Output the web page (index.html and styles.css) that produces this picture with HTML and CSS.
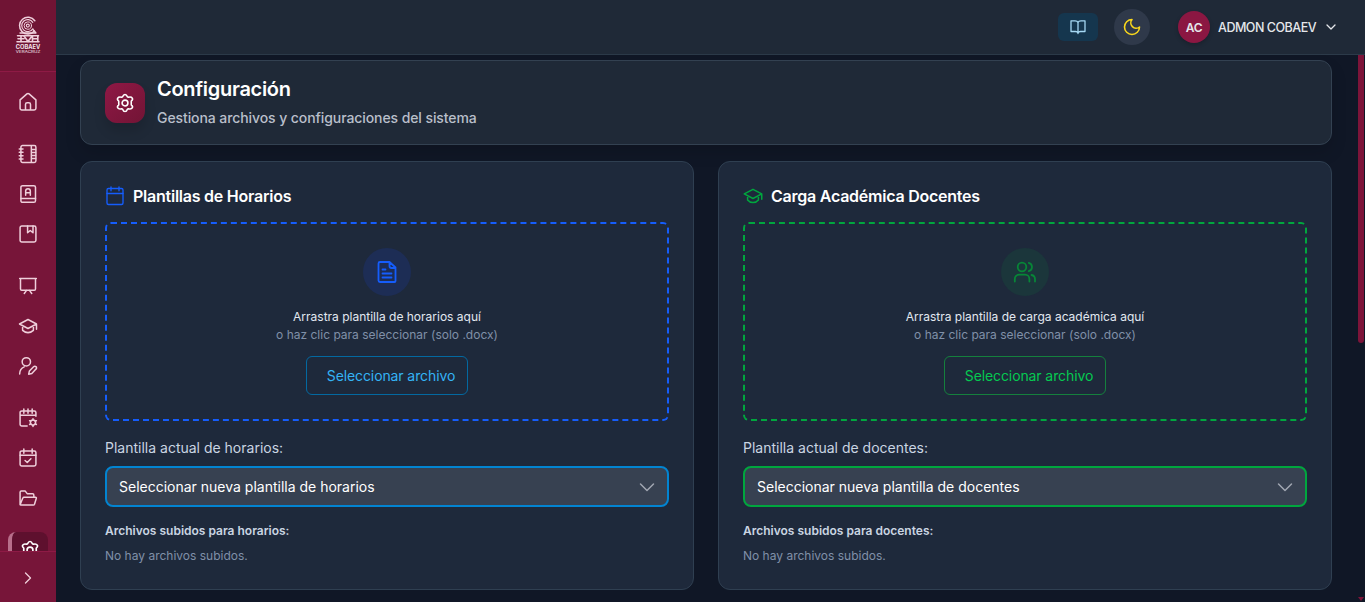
FILE: index.html
```html
<!DOCTYPE html>
<html lang="es">
<head>
<meta charset="utf-8">
<title>Configuración</title>
<link rel="stylesheet" href="styles.css">
</head>
<body>
<div class="app">
  <aside class="sidebar">
    <div class="brand">
      <svg class="logo" width="28" height="38" viewBox="0 0 28 38" fill="none" stroke="#f5e6ec">
        <path d="M20.800 4.800A8.400 8.400 0 1 0 20.400 15" stroke-width="1.500"/>
        <path d="M18.800 6.300A6 6 0 1 0 18.800 12.800" stroke-width="1.200"/>
        <circle cx="13.800" cy="9.600" r="3.700" stroke-width="1"/>
        <circle cx="13.800" cy="9.600" r="1.500" stroke-width="1.200"/>
        <path d="M19 13.500 22 17H6" stroke-width="1.300"/>
        <path d="M3.500 19.800H24.500M3 25.800h22" stroke-width="1.500"/>
        <path d="M4 22.700h6M18.500 22.700h5.500M7 25.500v-5.500M10 20l4 5.500 4-5.500M18.500 25.500V20M23.800 20v5.500" stroke-width="1.600"/>
        <text class="logo-name" x="1.800" y="32.600" textLength="24.500" lengthAdjust="spacingAndGlyphs">COBAEV</text>
        <text class="logo-sub" x="1.800" y="36.800" textLength="24.500" lengthAdjust="spacingAndGlyphs">VERACRUZ</text>
      </svg>
    </div>
    <nav class="nav">
      <div class="group">
        <a class="item"><svg class="ico" viewBox="0 0 24 24"><path d="M2.500 9.500 10.700 2.300a2 2 0 0 1 2.600 0L21.500 9.500v10a2 2 0 0 1-2 2h-15a2 2 0 0 1-2-2zM9 21.500V15a2 2 0 0 1 2-2h2a2 2 0 0 1 2 2v6.500"/></svg></a>
      </div>
      <div class="group">
        <a class="item"><svg class="ico" viewBox="0 0 24 24"><rect x="3.500" y="1.800" width="18" height="20.400" rx="2"/><path d="M16 2v20M1.500 6H6M1.500 10H6M1.500 14H6M1.500 18H6M16 6.500h5M16 10.200h5M16 13.800h5M16 17.500h5"/></svg></a>
        <a class="item"><svg class="ico" viewBox="0 0 24 24"><rect x="3.500" y="2" width="17.500" height="20" rx="2"/><path d="M3.500 17.500h17.500M9.200 13.500V8.500a2.800 2.800 0 0 1 5.600 0v5M9.200 10.500h5.600"/></svg></a>
        <a class="item"><svg class="ico" viewBox="0 0 24 24"><rect x="2.500" y="2.500" width="19" height="19" rx="2"/><path d="M11.500 2.500v8l3.200-2.700 3.300 2.700v-8"/></svg></a>
      </div>
      <div class="group">
        <a class="item"><svg class="ico" viewBox="0 0 24 24"><path d="M2 3h20M3 3v12.500a1.500 1.500 0 0 0 1.500 1.500h15a1.500 1.500 0 0 0 1.500-1.500V3M10.500 17 7.500 21M13.500 17l3 4"/></svg></a>
        <a class="item"><svg class="ico" viewBox="0 0 24 24"><path d="M12 4.200 1.800 9.600 12 15l10.200-5.400zM22.200 9.800V16M5.500 11.700v5.500c4 3.400 9 3.400 13 0v-5.500"/></svg></a>
        <a class="item"><svg class="ico" viewBox="0 0 24 24"><circle cx="10" cy="7" r="5"/><path d="M2 21.500c0-4 2-7 5.500-8.500M21.600 12.800a2 2 0 0 0-2.900 0l-5 5.200-.9 3.800 3.800-.9 5-5.200a2 2 0 0 0 0-2.900z"/></svg></a>
      </div>
      <div class="group">
        <a class="item"><svg class="ico" viewBox="0 0 24 24"><path d="M11 21.500H4.500a2 2 0 0 1-2-2v-14a2 2 0 0 1 2-2h15a2 2 0 0 1 2 2V10M2.500 8.800h19M7 1.200v5M12 1.200v5M17 1.200v5"/><circle cx="18" cy="17.500" r="3.100"/><path d="M18 12.800v1.500M18 20.700v1.500M13.900 15.200l1.300.7M20.800 19.100l1.300.7M13.900 19.800l1.300-.7M20.800 15.900l1.300-.7"/></svg></a>
        <a class="item"><svg class="ico" viewBox="0 0 24 24"><rect x="2.500" y="3.500" width="19" height="18" rx="2"/><path d="M2.500 8.800h19M7 1.200v5M17 1.200v5M8.500 15l2.600 2.400 4.400-4.400"/></svg></a>
        <a class="item"><svg class="ico" viewBox="0 0 24 24"><path d="M2.500 20V5a1.500 1.500 0 0 1 1.500-1.500h4.500L11 6.800h6.500A1.500 1.500 0 0 1 19 8.300V11M2.500 20 5.800 12a1.500 1.500 0 0 1 1.400-1H21a1 1 0 0 1 1 1.300l-2.200 7.200A1.500 1.500 0 0 1 18.300 20.500H3.500a1 1 0 0 1-1-.5z"/></svg></a>
      </div>
      <div class="group">
        <a class="item active"><svg class="ico gear" viewBox="0 0 24 24"><path d="M12 1.800c1.500 0 2.300 1.200 2.700 2.500l1.300.8c1.400-.4 3.900-.3 4.700 1s.1 2.600-1.200 3.600v4.600c1.300 1 2 2.300 1.200 3.600s-3.300 1.400-4.700 1l-1.300.8c-.4 1.300-1.200 2.500-2.700 2.500s-2.300-1.200-2.700-2.500l-1.300-.8c-1.400.4-3.900.3-4.700-1s-.1-2.600 1.200-3.600V9.700c-1.300-1-2-2.300-1.200-3.600s3.300-1.400 4.700-1l1.300-.8c.4-1.300 1.200-2.500 2.700-2.500z"/><circle cx="12" cy="12" r="3.500"/></svg></a>
      </div>
    </nav>
    <div class="expand"><svg width="16" height="16" viewBox="0 0 16 16"><path d="m5.500 3 5 5-5 5"/></svg></div>
  </aside>

  <div class="page">
    <header class="topbar">
      <button class="guide"><svg width="16" height="16" viewBox="0 0 16 16"><path d="M8 3.500v11M8 3.500C7.600 2.300 6.500 1.800 5 1.800H1v10.700h4.500c1.400 0 2.300.5 2.500 1.500.2-1 1.100-1.500 2.500-1.500H15V1.800h-4c-1.500 0-2.600.5-3 1.700z"/></svg></button>
      <button class="theme"><svg width="20" height="20" viewBox="0 0 24 24"><path d="M12 3a6.400 6.400 0 0 0 9 9 9 9 0 1 1-9-9z"/></svg></button>
      <div class="user">
        <span class="avatar">AC</span>
        <span class="user-name">ADMON COBAEV</span>
        <svg width="12" height="12" viewBox="0 0 12 12"><path d="m2 4 4 4 4-4"/></svg>
      </div>
    </header>
    <div class="body">
      <main class="content">
        <section class="card title-card">
          <span class="badge"><svg class="gear" width="20" height="20" viewBox="0 0 24 24"><path d="M12 1.800c1.500 0 2.300 1.200 2.700 2.500l1.300.8c1.400-.4 3.900-.3 4.700 1s.1 2.600-1.200 3.600v4.600c1.300 1 2 2.300 1.200 3.600s-3.300 1.400-4.700 1l-1.300.8c-.4 1.300-1.200 2.500-2.700 2.500s-2.300-1.200-2.700-2.500l-1.300-.8c-1.400.4-3.900.3-4.700-1s-.1-2.600 1.200-3.600V9.700c-1.300-1-2-2.300-1.200-3.600s3.300-1.400 4.700-1l1.300-.8c.4-1.300 1.200-2.500 2.700-2.500z"/><circle cx="12" cy="12" r="3.500"/></svg></span>
          <div>
            <h1>Configuración</h1>
            <p class="subtitle">Gestiona archivos y configuraciones del sistema</p>
          </div>
        </section>
        <div class="columns">
          <section class="card panel blue">
            <h2><svg width="20" height="20" viewBox="0 0 20 20"><rect x="2" y="2.500" width="16" height="16" rx="1.500"/><path d="M2 7.500h16M6 .8v3.900M14 .8v3.900"/></svg>Plantillas de Horarios</h2>
            <div class="drop">
              <span class="round"><svg width="24" height="24" viewBox="0 0 24 24"><path d="M14.500 2H5a1.500 1.500 0 0 0-1.500 1.500v17A1.500 1.500 0 0 0 5 22h14.500a1 1 0 0 0 1-1V7.500zM14.500 2v4a2 2 0 0 0 2 2h4M7.500 9.500h3M7.500 13.500h9M7.500 17.500h9"/></svg></span>
              <p class="lead">Arrastra plantilla de horarios aquí</p>
              <p class="hint">o haz clic para seleccionar (solo .docx)</p>
              <button class="pick">Seleccionar archivo</button>
            </div>
            <label>Plantilla actual de horarios:</label>
            <div class="select"><span>Seleccionar nueva plantilla de horarios</span><svg width="16" height="16" viewBox="0 0 16 16"><path d="m1.500 5 6.500 6.500L14.500 5"/></svg></div>
            <h3>Archivos subidos para horarios:</h3>
            <p class="empty">No hay archivos subidos.</p>
          </section>
          <section class="card panel green">
            <h2><svg width="20" height="20" viewBox="0 0 24 24" class="cap"><path d="M12 4 1.500 9.500 12 15l10.500-5.500zM22.500 9.700V16M5.500 11.700v5c1.800 2.200 4 3.200 6.500 3.200s4.700-1 6.500-3.200v-5"/></svg>Carga Académica Docentes</h2>
            <div class="drop">
              <span class="round"><svg width="24" height="24" viewBox="0 0 24 24"><circle cx="9" cy="7" r="4.300"/><path d="M1.800 21.500V19a4.300 4.300 0 0 1 4.300-4.300h6A4.300 4.300 0 0 1 16.400 19v2.500M15.800 2.900a4.300 4.300 0 0 1 0 8.300M18.500 15a4.300 4.300 0 0 1 3.500 4.200v2.300"/></svg></span>
              <p class="lead">Arrastra plantilla de carga académica aquí</p>
              <p class="hint">o haz clic para seleccionar (solo .docx)</p>
              <button class="pick">Seleccionar archivo</button>
            </div>
            <label>Plantilla actual de docentes:</label>
            <div class="select"><span>Seleccionar nueva plantilla de docentes</span><svg width="16" height="16" viewBox="0 0 16 16"><path d="m1.500 5 6.500 6.500L14.500 5"/></svg></div>
            <h3>Archivos subidos para docentes:</h3>
            <p class="empty">No hay archivos subidos.</p>
          </section>
        </div>
      </main>
      <div class="scrollbar"><span class="thumb"></span><span class="arrow"></span></div>
    </div>
  </div>
</div>
</body>
</html>
```
FILE: styles.css
```css
* { box-sizing: border-box; margin: 0; padding: 0; }
body { font-family: Inter, sans-serif; background: #101726; color: #fff; overflow: hidden; }
svg { fill: none; stroke: currentColor; stroke-linecap: round; stroke-linejoin: round; flex: none; display: block; }
button { font-family: inherit; border: 0; }
.app { display: flex; height: 602px; }

.sidebar { width: 56px; flex: none; display: flex; flex-direction: column; background: #771539; color: #efcfdb; }
.brand { height: 72px; flex: none; padding-top: 16px; display: flex; justify-content: center; background: #701434; border-bottom: 1px solid #8e1a45; }
.logo text { fill: #f5e6ec; stroke: none; font-family: Inter, sans-serif; }
.logo-name { font-size: 5.500px; font-weight: 700; }
.logo-sub { font-size: 4px; font-weight: 400; }
.nav { flex: 1; min-height: 0; overflow: hidden; padding: 12px 8px 0; display: flex; flex-direction: column; gap: 16px; }
.group { display: flex; flex-direction: column; gap: 4px; }
.item { height: 36px; flex: none; display: flex; align-items: center; justify-content: center; border-radius: 8px; }
.ico { width: 20px; height: 20px; stroke-width: 1.800; }
.active { background: #5e102e; color: #fff; border-left: 4px solid #b86f8b; }
.ico.gear { stroke-width: 2; }
.expand { height: 51px; flex: none; border-top: 1px solid #8e1a45; display: flex; align-items: center; justify-content: center; padding-top: 2px; }
.expand svg { stroke-width: 1.300; }

.page { flex: 1; min-width: 0; display: flex; flex-direction: column; }
.topbar { height: 55px; flex: none; display: flex; align-items: center; justify-content: flex-end; padding-right: 28px; background: #1f2937; border-bottom: 1px solid #2c3a49; }
.guide { width: 40px; height: 28px; border-radius: 6px; background: #15364e; color: #a5d8f3; display: flex; align-items: center; justify-content: center; margin-right: 16px; }
.guide svg { stroke-width: 1.300; }
.theme { width: 36px; height: 36px; border-radius: 50%; background: #2f394a; color: #f9d71c; display: flex; align-items: center; justify-content: center; margin-right: 28px; }
.theme svg { stroke-width: 1.900; }
.user { display: flex; align-items: center; gap: 8px; color: #e5e7eb; }
.user svg { stroke-width: 1.300; }
.avatar { width: 32px; height: 32px; border-radius: 50%; background: #8b1742; font-size: 12px; font-weight: 600; letter-spacing: -.300px; display: flex; align-items: center; justify-content: center; box-shadow: 0 2px 4px #0003; }
.user-name { width: 99px; font-size: 12.500px; font-weight: 500; letter-spacing: -.480px; white-space: nowrap; }

.body { flex: 1; min-height: 0; display: flex; }
.content { flex: 1; padding: 5px 26px 12px 24px; display: flex; flex-direction: column; gap: 16px; }
.card { border: 1px solid #2f3f51; border-radius: 12px; background: #1e293b; }
.title-card { height: 85px; display: flex; align-items: center; gap: 12px; padding: 0 24px; background: #1f2937; border-color: #334151; box-shadow: 0 8px 16px #0002; }
.badge { width: 40px; height: 40px; border-radius: 12px; background: linear-gradient(135deg, #8f1845, #721435); display: flex; align-items: center; justify-content: center; box-shadow: 0 8px 12px #0002; }
.badge svg { stroke-width: 1.900; }
h1 { font-size: 20px; line-height: 28px; font-weight: 600; letter-spacing: -.300px; }
.subtitle { margin-top: 3px; padding-bottom: 1px; font-size: 14px; line-height: 24px; font-weight: 500; letter-spacing: -.085px; color: #b9bfca; }
.columns { height: 429px; display: grid; grid-template-columns: 1fr 1fr; gap: 24px; }
.panel { padding: 24px; }
.blue { --main: #155dfc; --soft: #1d2d55; --icon: #155dfc; --text: #34b3f5; --edge: #0369a1; --select: #0284d1; }
.green { --main: #00a63e; --soft: #1b363b; --icon: #078637; --text: #05c951; --edge: #15803d; --select: #00a63e; }
h2 { height: 20px; display: flex; align-items: center; gap: 8px; font-size: 16px; line-height: 20px; font-weight: 600; letter-spacing: -.240px; }
h2 svg { color: var(--main); stroke-width: 1.350; }
h2 .cap { stroke-width: 1.800; }
.drop { height: 199px; margin-top: 16px; border: 2px dashed var(--main); border-radius: 6px; display: flex; flex-direction: column; align-items: center; padding-top: 24px; }
.round { width: 48px; height: 48px; border-radius: 50%; background: var(--soft); color: var(--icon); display: flex; align-items: center; justify-content: center; margin-bottom: 12px; }
.round svg { stroke-width: 1.800; }
.lead, .hint { font-size: 12px; line-height: 18px; }
.lead { color: #e2e8f0; }
.hint { color: #8090a8; }
.pick { width: 162px; height: 39px; margin-top: 12px; padding-left: 8px; border: 1px solid var(--edge); border-radius: 6px; background: none; color: var(--text); font-size: 14px; letter-spacing: -.100px; }
label { display: block; margin-top: 17px; font-size: 14px; line-height: 20px; color: #cad5e2; }
.select { height: 41px; margin-top: 8px; border: 2px solid var(--select); border-radius: 8px; background: #374151; display: flex; align-items: center; justify-content: space-between; padding: 0 12px; font-size: 14px; }
.select svg { color: #a0a6b1; stroke-width: 1.500; }
h3 { margin-top: 16px; font-size: 12px; line-height: 16px; font-weight: 600; color: #cad5e2; }
.empty { margin-top: 8px; font-size: 12px; line-height: 18px; color: #8090a8; }

.scrollbar { width: 7px; padding-right: 1px; display: flex; flex-direction: column; justify-content: space-between; }
.thumb { height: 288px; background: #7d1439; border-radius: 0 0 3px 3px; }
.arrow { height: 5px; border-top: 4px solid #7d1439; border-left: 3px solid transparent; border-right: 3px solid transparent; }
```
